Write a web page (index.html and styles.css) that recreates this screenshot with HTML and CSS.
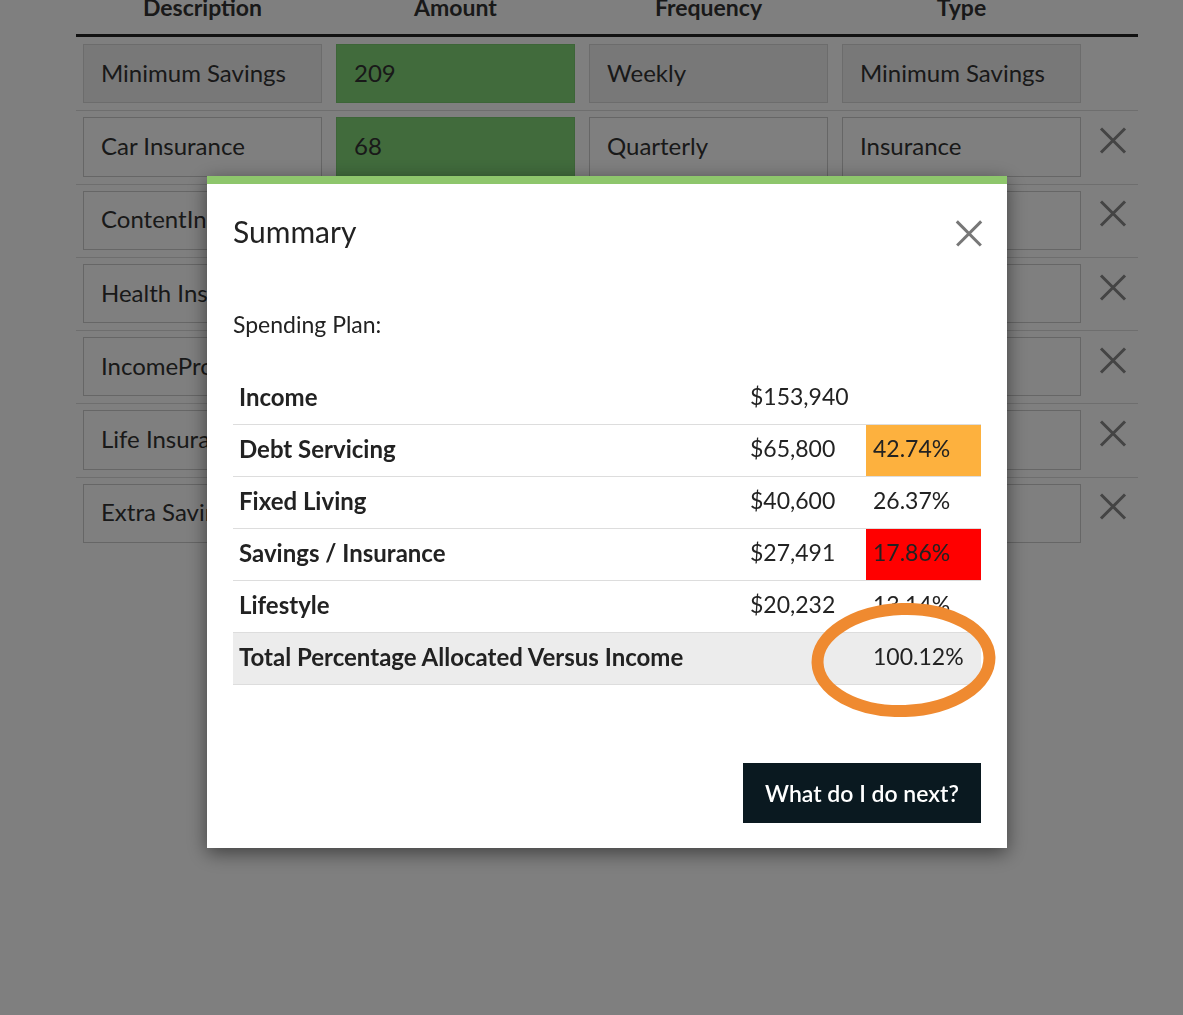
FILE: index.html
```html
<!DOCTYPE html>
<html lang="en">
<head>
    <meta charset="UTF-8">
    <meta name="viewport" content="width=device-width, initial-scale=1.0">
    <title>Spending Plan</title>
    <link rel="stylesheet" href="styles.css">
</head>
<body>
    <div class="page">
        <table class="items">
            <thead>
                <tr>
                    <th>Description</th>
                    <th>Amount</th>
                    <th>Frequency</th>
                    <th>Type</th>
                    <th class="col-remove"></th>
                </tr>
            </thead>
            <tbody>
                <tr class="locked">
                    <td><input class="field" value="Minimum Savings" readonly></td>
                    <td><input class="field amount" value="209" readonly></td>
                    <td><input class="field" value="Weekly" readonly></td>
                    <td><input class="field" value="Minimum Savings" readonly></td>
                    <td class="col-remove"></td>
                </tr>
                <tr>
                    <td><input class="field" value="Car Insurance" readonly></td>
                    <td><input class="field amount" value="68" readonly></td>
                    <td><input class="field" value="Quarterly" readonly></td>
                    <td><input class="field" value="Insurance" readonly></td>
                    <td class="col-remove"><span class="remove"></span></td>
                </tr>
                <tr>
                    <td><input class="field" value="ContentInsurance" readonly></td>
                    <td><input class="field amount" value="25" readonly></td>
                    <td><input class="field" value="Monthly" readonly></td>
                    <td><input class="field" value="Insurance" readonly></td>
                    <td class="col-remove"><span class="remove"></span></td>
                </tr>
                <tr>
                    <td><input class="field" value="Health Insurance" readonly></td>
                    <td><input class="field amount" value="180" readonly></td>
                    <td><input class="field" value="Monthly" readonly></td>
                    <td><input class="field" value="Insurance" readonly></td>
                    <td class="col-remove"><span class="remove"></span></td>
                </tr>
                <tr>
                    <td><input class="field" value="IncomeProtection" readonly></td>
                    <td><input class="field amount" value="95" readonly></td>
                    <td><input class="field" value="Monthly" readonly></td>
                    <td><input class="field" value="Insurance" readonly></td>
                    <td class="col-remove"><span class="remove"></span></td>
                </tr>
                <tr>
                    <td><input class="field" value="Life Insurance" readonly></td>
                    <td><input class="field amount" value="60" readonly></td>
                    <td><input class="field" value="Monthly" readonly></td>
                    <td><input class="field" value="Insurance" readonly></td>
                    <td class="col-remove"><span class="remove"></span></td>
                </tr>
                <tr>
                    <td><input class="field" value="Extra Savings" readonly></td>
                    <td><input class="field amount" value="100" readonly></td>
                    <td><input class="field" value="Weekly" readonly></td>
                    <td><input class="field" value="Savings" readonly></td>
                    <td class="col-remove"><span class="remove"></span></td>
                </tr>
            </tbody>
        </table>
    </div>

    <div class="backdrop">
        <div class="modal">
            <div class="modal-header">
                <h2>Summary</h2>
                <span class="close"></span>
            </div>
            <div class="modal-body">
                <p class="subtitle">Spending Plan:</p>
                <table class="summary">
                    <tr>
                        <th>Income</th>
                        <td class="money">$153,940</td>
                        <td class="pct"></td>
                    </tr>
                    <tr>
                        <th>Debt Servicing</th>
                        <td class="money">$65,800</td>
                        <td class="pct warn">42.74%</td>
                    </tr>
                    <tr>
                        <th>Fixed Living</th>
                        <td class="money">$40,600</td>
                        <td class="pct">26.37%</td>
                    </tr>
                    <tr>
                        <th>Savings / Insurance</th>
                        <td class="money">$27,491</td>
                        <td class="pct danger">17.86%</td>
                    </tr>
                    <tr>
                        <th>Lifestyle</th>
                        <td class="money">$20,232</td>
                        <td class="pct">13.14%</td>
                    </tr>
                    <tr class="total">
                        <th colspan="2">Total Percentage Allocated Versus Income</th>
                        <td class="pct">100.12%</td>
                    </tr>
                </table>
            </div>
            <div class="modal-footer">
                <button class="next-button">What do I do next?</button>
            </div>
            <svg class="circle-mark" width="187" height="114" viewBox="0 0 187 114">
                <ellipse cx="93.5" cy="57" rx="86" ry="51" fill="none" stroke="#ef8a30" stroke-width="12" transform="rotate(-2 93.5 57)"/>
            </svg>
        </div>
    </div>
</body>
</html>
```

FILE: styles.css
```css
body {
    font-family: Lato, "Open Sans", sans-serif;
    margin: 0;
    background-color: #fff;
    color: #333;
    height: 100vh;
    overflow: hidden;
}

.page {
    margin-top: -6px;
    padding-left: 76px;
}

.items {
    width: 1062px;
    border-collapse: collapse;
}

.items th {
    font-size: 23px;
    line-height: 26px;
    font-weight: bold;
    text-align: center;
    padding: 0 0 14px;
    border-bottom: 3px solid #222;
    width: 253px;
}

.items th.col-remove,
.items td.col-remove {
    width: 50px;
    text-align: center;
    vertical-align: middle;
}

.items td {
    padding: 6px 7px 7px;
    border-top: 1px solid #ddd;
}

.items tbody tr:first-child td {
    border-top: none;
    padding-top: 7px;
}

.field {
    display: block;
    box-sizing: border-box;
    width: 239px;
    height: 59.3px;
    padding: 0 17px 3px;
    font: inherit;
    font-size: 24px;
    color: #333;
    background-color: #fff;
    border: 1px solid #ccc;
    outline: none;
}

.locked .field {
    background-color: #f1f1f1;
    border-color: #d8d8d8;
}

.field.amount {
    background-color: #82d678;
    border-color: #7acb70;
}

.remove,
.close {
    display: inline-block;
    position: relative;
    width: 26px;
    height: 26px;
}

.remove::before,
.remove::after,
.close::before,
.close::after {
    content: "";
    position: absolute;
    left: -4px;
    top: 11.5px;
    width: 34px;
    height: 3px;
    background-color: #888;
}

.remove::before,
.close::before {
    transform: rotate(45deg);
}

.remove::after,
.close::after {
    transform: rotate(-45deg);
}

.remove {
    margin-top: -16px;
}

.backdrop {
    position: fixed;
    inset: 0;
    background-color: rgba(0, 0, 0, 0.5);
}

.modal {
    position: relative;
    width: 800px;
    margin: 176px 0 0 207px;
    background-color: #fff;
    border-top: 8px solid #8ec66c;
    box-shadow: 0 5px 18px rgba(0, 0, 0, 0.5);
    box-sizing: border-box;
    padding: 0 26px;
}

.modal-header {
    display: flex;
    justify-content: space-between;
    align-items: center;
    padding-top: 30px;
}

.modal-header h2 {
    margin: 0;
    font-size: 30px;
    font-weight: normal;
    line-height: 34px;
    color: #222;
}

.close {
    margin-right: -1px;
    margin-top: 4px;
}

.close::before,
.close::after {
    height: 2.5px;
    background-color: #777;
}

.subtitle {
    margin: 62px 0 35px;
    font-size: 23px;
    line-height: 28px;
    color: #222;
}

.summary {
    width: 100%;
    border-collapse: collapse;
    font-size: 23px;
    color: #222;
}

.summary th,
.summary td {
    padding: 8px 6px 12px;
    line-height: 31px;
    text-align: left;
    border-top: 1px solid #ddd;
}

.summary tr:first-child th,
.summary tr:first-child td {
    border-top: none;
}

.summary th {
    font-size: 24px;
    font-weight: bold;
}

.summary .money {
    width: 110px;
    padding-left: 7px;
}

.summary .pct {
    width: 102px;
    padding-left: 7px;
}

.summary .warn {
    background-color: #fdb13e;
}

.summary .danger {
    background-color: #ff0000;
}

.summary .total th,
.summary .total td {
    background-color: #ececec;
    border-bottom: 1px solid #ddd;
}

.modal-footer {
    display: flex;
    justify-content: flex-end;
    padding: 78px 0 25px;
}

.next-button {
    width: 238px;
    height: 60px;
    font-family: inherit;
    font-size: 23px;
    font-weight: 600;
    color: #fff;
    background-color: #0a1920;
    border: none;
    cursor: pointer;
}

.circle-mark {
    position: absolute;
    left: 603px;
    top: 419px;
}
```
